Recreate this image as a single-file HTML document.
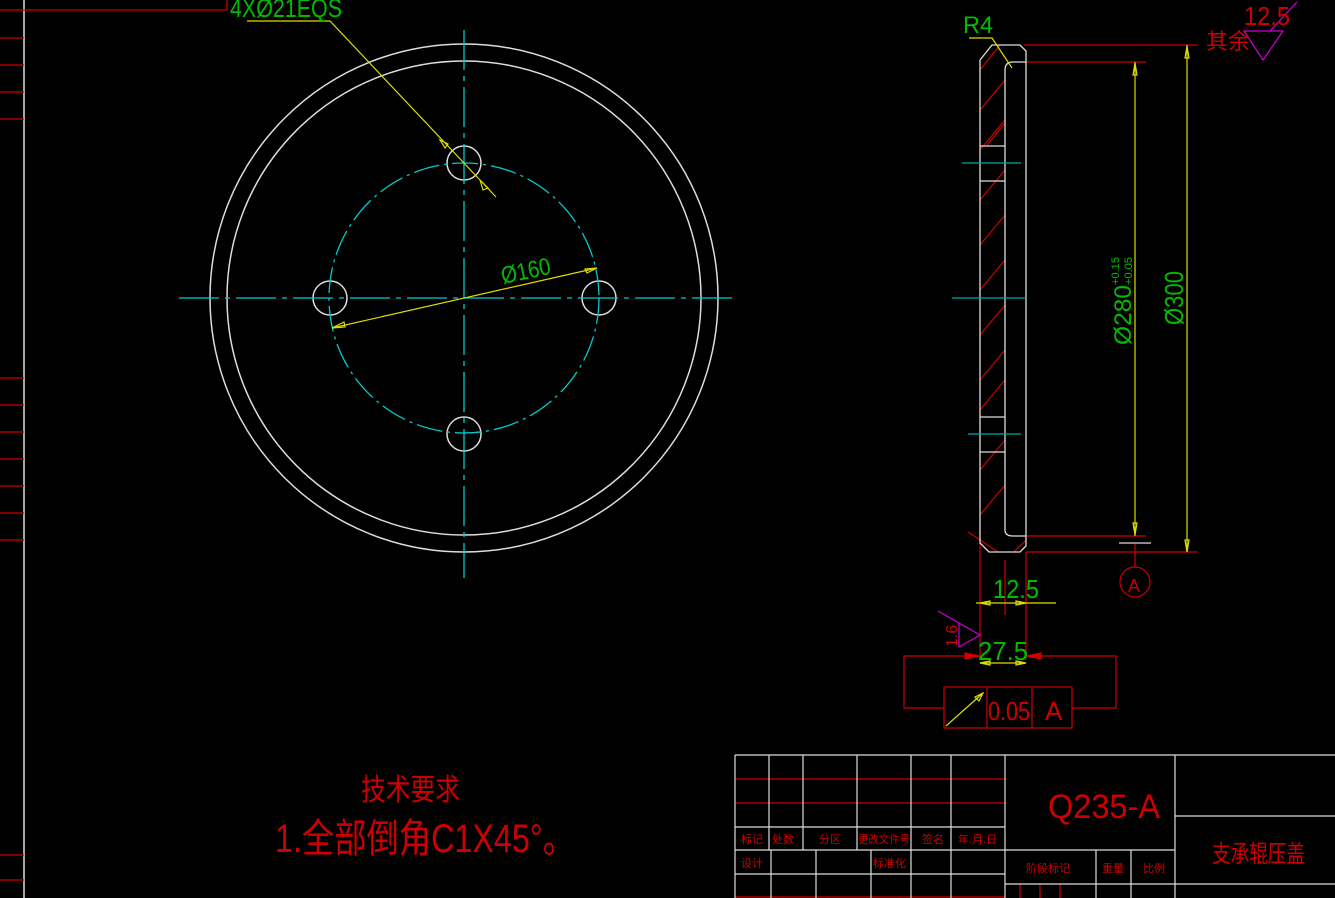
<!DOCTYPE html>
<html><head><meta charset="utf-8"><style>
html,body{margin:0;padding:0;background:#000;overflow:hidden}
svg{display:block}
text{font-family:"Liberation Sans","Noto Sans CJK SC",sans-serif}
</style></head><body>
<svg width="1335" height="898" viewBox="0 0 1335 898" xmlns="http://www.w3.org/2000/svg" fill="none">
<line x1="24" y1="0" x2="24" y2="898" stroke="#ddd" stroke-width="1.5"/>
<g stroke="#c00" stroke-width="1.3">
<path d="M0 10H227V0"/>
<path d="M0 38H24M0 65H24M0 92H24M0 119H24M0 378H24M0 405H24M0 432H24M0 459H24M0 486H24M0 513H24M0 540H24M0 855H24M0 880H24"/>
</g>
<g stroke="#ddd" stroke-width="1.5">
<circle cx="464" cy="298" r="254"/>
<circle cx="464" cy="298" r="237"/>
<circle cx="464" cy="163" r="17"/>
<circle cx="330" cy="298" r="17"/>
<circle cx="599" cy="298" r="17"/>
<circle cx="464" cy="434" r="17"/>
</g>
<g stroke="#0cc" stroke-width="1.3">
<circle cx="464" cy="298" r="135" stroke-dasharray="26,5,3,5"/>
<line x1="179" y1="298" x2="738" y2="298" stroke-dasharray="40,6,5,6"/>
<line x1="464" y1="30" x2="464" y2="578" stroke-dasharray="40,6,5,6"/>
</g>
<g stroke="#dd0" stroke-width="1.2">
<path d="M247 21H330L496 197"/>
<path d="M332 328L597 268"/>
<path d="M440 140l8 4-3 4z M480 180l8 8-5 2z M332 328l12-6 1 5z M597 268l-12 1 2 4z"/>
</g>
<text x="230" y="17" fill="#0b0" font-size="26" textLength="112" lengthAdjust="spacingAndGlyphs">4XØ21EQS</text>
<text x="503" y="284" fill="#0b0" font-size="24" textLength="50" lengthAdjust="spacingAndGlyphs" transform="rotate(-12 503 284)">Ø160</text>
<g stroke="#c00" stroke-width="1.2">
<path d="M1024 45H1198M1026 62H1146M1026 536H1146M1026 552H1198"/>
<path d="M980 530V660M1026 552V660M1005 560V615"/>
<path d="M980 70l20-25M980 110l25-30M980 150l25-30M987 145l18-22M980 200l25-30M980 245l25-30M980 290l25-30M980 335l25-30M980 380l25-30M980 410l25-30M980 470l25-30M980 515l25-30M968 532l30 20M1014 552l12-12"/>
<circle cx="1135" cy="582" r="15"/>
<line x1="1135" y1="544" x2="1135" y2="567"/>
<path d="M1026 656H1116V708H1072M980 656H904V708H944"/>
<rect x="944" y="687" width="128" height="41"/>
<path d="M987 687V728M1032 687V728"/>
<path d="M965 653l15 3-15 3z M1041 653l-15 3 15 3z" fill="#c00"/>
</g>
<g stroke="#ddd" stroke-width="1.3">
<path d="M980 60L992 45H1020L1026 51V546L1020 552H989L980 543Z"/>
<path d="M1005 70Q1005 62 1013 62H1026M1005 70V530Q1005 536 1013 536H1026"/>
<path d="M980 146H1005M980 181H1005M980 417H1005M980 452H1005M1119 543H1151"/>
</g>
<g stroke="#0aa" stroke-width="1.3"><path d="M962 163H1021M952 298H1026M968 434H1021"/></g>
<g stroke="#dd0" stroke-width="1.2">
<path d="M1135 62V536M1187 45V552"/>
<path d="M1133 75l2-12 2 12zM1133 523l2 12 2-12zM1185 58l2-12 2 12zM1185 540l2 12 2-12z"/>
<path d="M969 38H992L1012 68"/>
<path d="M976 603H1056M980 663H1026M990 601l-10 2 10 2zM1016 601l10 2-10 2zM990 661l-10 2 10 2zM1016 661l10 2-10 2z"/>
<path d="M946 726L983 693M975 697l8-4-4 8z"/>
</g>
<text x="963" y="33" fill="#0b0" font-size="24" textLength="30" lengthAdjust="spacingAndGlyphs">R4</text>
<text x="993" y="598" fill="#0b0" font-size="26" textLength="46" lengthAdjust="spacingAndGlyphs">12.5</text>
<text x="978" y="660" fill="#0b0" font-size="26" textLength="50" lengthAdjust="spacingAndGlyphs">27.5</text>
<text x="1131" y="345" fill="#0b0" font-size="24" textLength="60" lengthAdjust="spacingAndGlyphs" transform="rotate(-90 1131 345)">Ø280</text>
<text x="1119" y="285" fill="#0b0" font-size="11" textLength="28" lengthAdjust="spacingAndGlyphs" transform="rotate(-90 1119 285)">+0.15</text>
<text x="1132" y="285" fill="#0b0" font-size="11" textLength="28" lengthAdjust="spacingAndGlyphs" transform="rotate(-90 1132 285)">+0.05</text>
<text x="1183" y="325" fill="#0b0" font-size="26" textLength="54" lengthAdjust="spacingAndGlyphs" transform="rotate(-90 1183 325)">Ø300</text>
<text x="1128" y="592" fill="#c00" font-size="18">A</text>
<text x="988" y="720" fill="#c00" font-size="26" textLength="42" lengthAdjust="spacingAndGlyphs">0.05</text>
<text x="1045" y="720" fill="#c00" font-size="26">A</text>
<text x="957" y="647" fill="#c00" font-size="16" transform="rotate(-90 957 647)">1.6</text>
<g stroke="#c0c" stroke-width="1.2"><path d="M938 611L980 635L959 647V623M1244 31H1283L1263 60Z M1270 31L1297 2"/></g>
<text x="1206" y="49" fill="#c00" font-size="22">其余</text>
<text x="1244" y="25" fill="#c00" font-size="26" textLength="46" lengthAdjust="spacingAndGlyphs">12.5</text>
<text x="361" y="800" fill="#c00" font-size="30" textLength="99" lengthAdjust="spacingAndGlyphs">技术要求</text>
<text x="275" y="852" fill="#c00" font-size="40" textLength="300" lengthAdjust="spacingAndGlyphs">1.全部倒角C1X45°。</text>
<g stroke="#c00" stroke-width="1.2"><path d="M735 779H1005M735 803H1005M735 897H1005M1020 884V898M1040 884V898M1060 884V898"/></g>
<g stroke="#ddd" stroke-width="1.2">
<path d="M735 755H1335M735 755V898M735 827H1005M735 850H1175M735 874H1005M1005 755V898M1175 755V898M1175 816H1335M1005 884H1335"/>
<path d="M769 755V850M803 755V850M857 755V850M911 755V898M951 755V898"/>
<path d="M771 850V898M816 850V898M871 850V898M1096 850V898M1131 850V898"/>
</g>
<text x="1048" y="818" fill="#c00" font-size="34" textLength="112" lengthAdjust="spacingAndGlyphs">Q235-A</text>
<g fill="#c00" font-size="11">
<text x="741" y="843">标记</text><text x="772" y="843">处数</text><text x="819" y="843">分区</text>
<text x="858" y="843" textLength="52" lengthAdjust="spacingAndGlyphs">更改文件号</text><text x="922" y="843">签名</text><text x="958" y="843">年.月.日</text>
<text x="741" y="867">设计</text><text x="873" y="867">标准化</text>
<text x="1026" y="872">阶段标记</text><text x="1102" y="872">重量</text><text x="1143" y="872">比例</text>
</g>
<text x="1212" y="862" fill="#c00" font-size="24" textLength="93" lengthAdjust="spacingAndGlyphs">支承辊压盖</text>
</svg>
</body></html>
